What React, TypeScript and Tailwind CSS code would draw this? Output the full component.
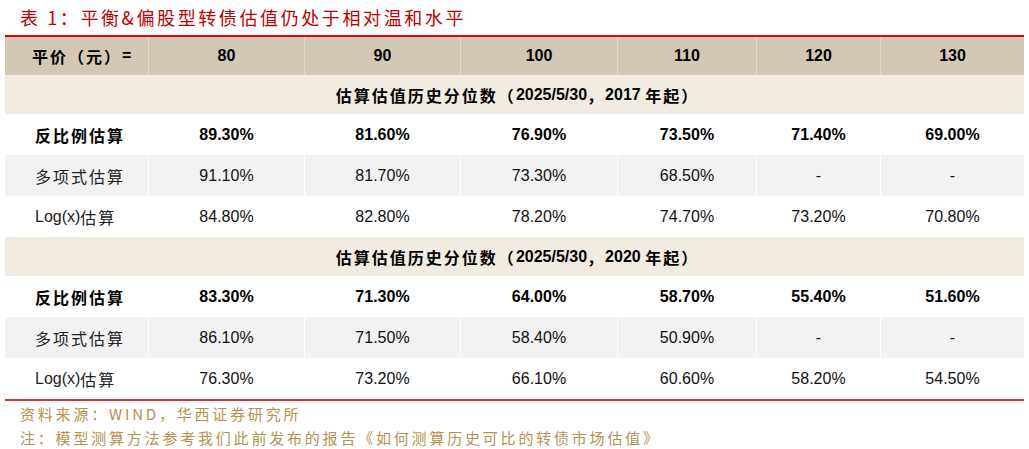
import React from "react";

const FONT = { fontFamily: '"Liberation Sans", "Noto Sans CJK SC", sans-serif' };

const cols = ["80", "90", "100", "110", "120", "130"];

type Row = { label: React.ReactNode; values: string[]; bold?: boolean; gray?: boolean };

const Cn = ({ children, className = "" }: { children: React.ReactNode; className?: string }) => (
  <span className={`tracking-[2px] leading-none ${className}`} style={{ fontFamily: '"Noto Sans CJK SC", sans-serif' }}>
    {children}
  </span>
);

const section1: Row[] = [
  { label: <Cn className="font-bold">反比例估算</Cn>, values: ["89.30%", "81.60%", "76.90%", "73.50%", "71.40%", "69.00%"], bold: true },
  { label: <Cn>多项式估算</Cn>, values: ["91.10%", "81.70%", "73.30%", "68.50%", "-", "-"], gray: true },
  { label: <><span>Log(x)</span><Cn>估算</Cn></>, values: ["84.80%", "82.80%", "78.20%", "74.70%", "73.20%", "70.80%"] },
];

const section2: Row[] = [
  { label: <Cn className="font-bold">反比例估算</Cn>, values: ["83.30%", "71.30%", "64.00%", "58.70%", "55.40%", "51.60%"], bold: true },
  { label: <Cn>多项式估算</Cn>, values: ["86.10%", "71.50%", "58.40%", "50.90%", "-", "-"], gray: true },
  { label: <><span>Log(x)</span><Cn>估算</Cn></>, values: ["76.30%", "73.20%", "66.10%", "60.60%", "58.20%", "54.50%"] },
];

const GRID = "grid grid-cols-[143px_156px_156px_157px_139px_124px_144px]";

function DataRow({ row }: { row: Row }) {
  return (
    <div className={`${GRID} h-[41px] ${row.gray ? "bg-[#f2f2f2]" : "bg-white"} text-[16px] text-[#111]`}>
      <div className={`flex items-center pl-[30px] ${row.bold ? "font-bold text-black" : "text-[#222]"}`}>{row.label}</div>
      {row.values.map((v, i) => (
        <div key={i} className={`flex items-center justify-center border-l border-white ${row.bold ? "font-bold text-black" : ""}`}>
          {v}
        </div>
      ))}
    </div>
  );
}

function Section({ year }: { year: string }) {
  return (
    <div className="h-[39px] bg-[#f2ebe1] flex items-center justify-center font-bold text-[16px] text-black pl-[6px]">
      <Cn className="font-bold">估算估值历史分位数（</Cn>
      <span>2025/5/30</span>
      <Cn className="font-bold">，</Cn>
      <span>{year}&nbsp;</span>
      <Cn className="font-bold">年起）</Cn>
    </div>
  );
}

export default function App() {
  return (
    <div className="w-[1029px] h-[449px] bg-white overflow-hidden" style={FONT}>
      <div className="h-[35px] flex items-center pl-[20px] text-[18px] text-[#c00000] tracking-[2.6px]" style={{ fontFamily: '"Noto Sans CJK SC", sans-serif' }}>
        表 1：平衡&amp;偏股型转债估值仍处于相对温和水平
      </div>
      <div className="ml-[5px] w-[1019px] border-t-2 border-[#e00000]">
        <div className={`${GRID} h-[38px] bg-[#d3c8b5] text-[16px] font-bold text-black`}>
          <div className="flex items-center pl-[27px]">
            <Cn className="font-bold">平价（元）</Cn>
            <span>=</span>
          </div>
          {cols.map((c) => (
            <div key={c} className="flex items-center justify-center border-l border-[#e2dacd]">
              {c}
            </div>
          ))}
        </div>
        <Section year="2017" />
        {section1.map((r, i) => (
          <DataRow key={i} row={r} />
        ))}
        <Section year="2020" />
        {section2.map((r, i) => (
          <DataRow key={i} row={r} />
        ))}
        <div className="h-[2px] bg-[#d43535]" />
      </div>
      <div className="pl-[20px] pt-[1px] text-[15px] leading-[24px] text-[#b8904f] tracking-[2.8px]" style={{ fontFamily: '"Noto Sans CJK SC", sans-serif' }}>
        <div>资料来源：WIND，华西证券研究所</div>
        <div>注：模型测算方法参考我们此前发布的报告《如何测算历史可比的转债市场估值》</div>
      </div>
    </div>
  );
}
